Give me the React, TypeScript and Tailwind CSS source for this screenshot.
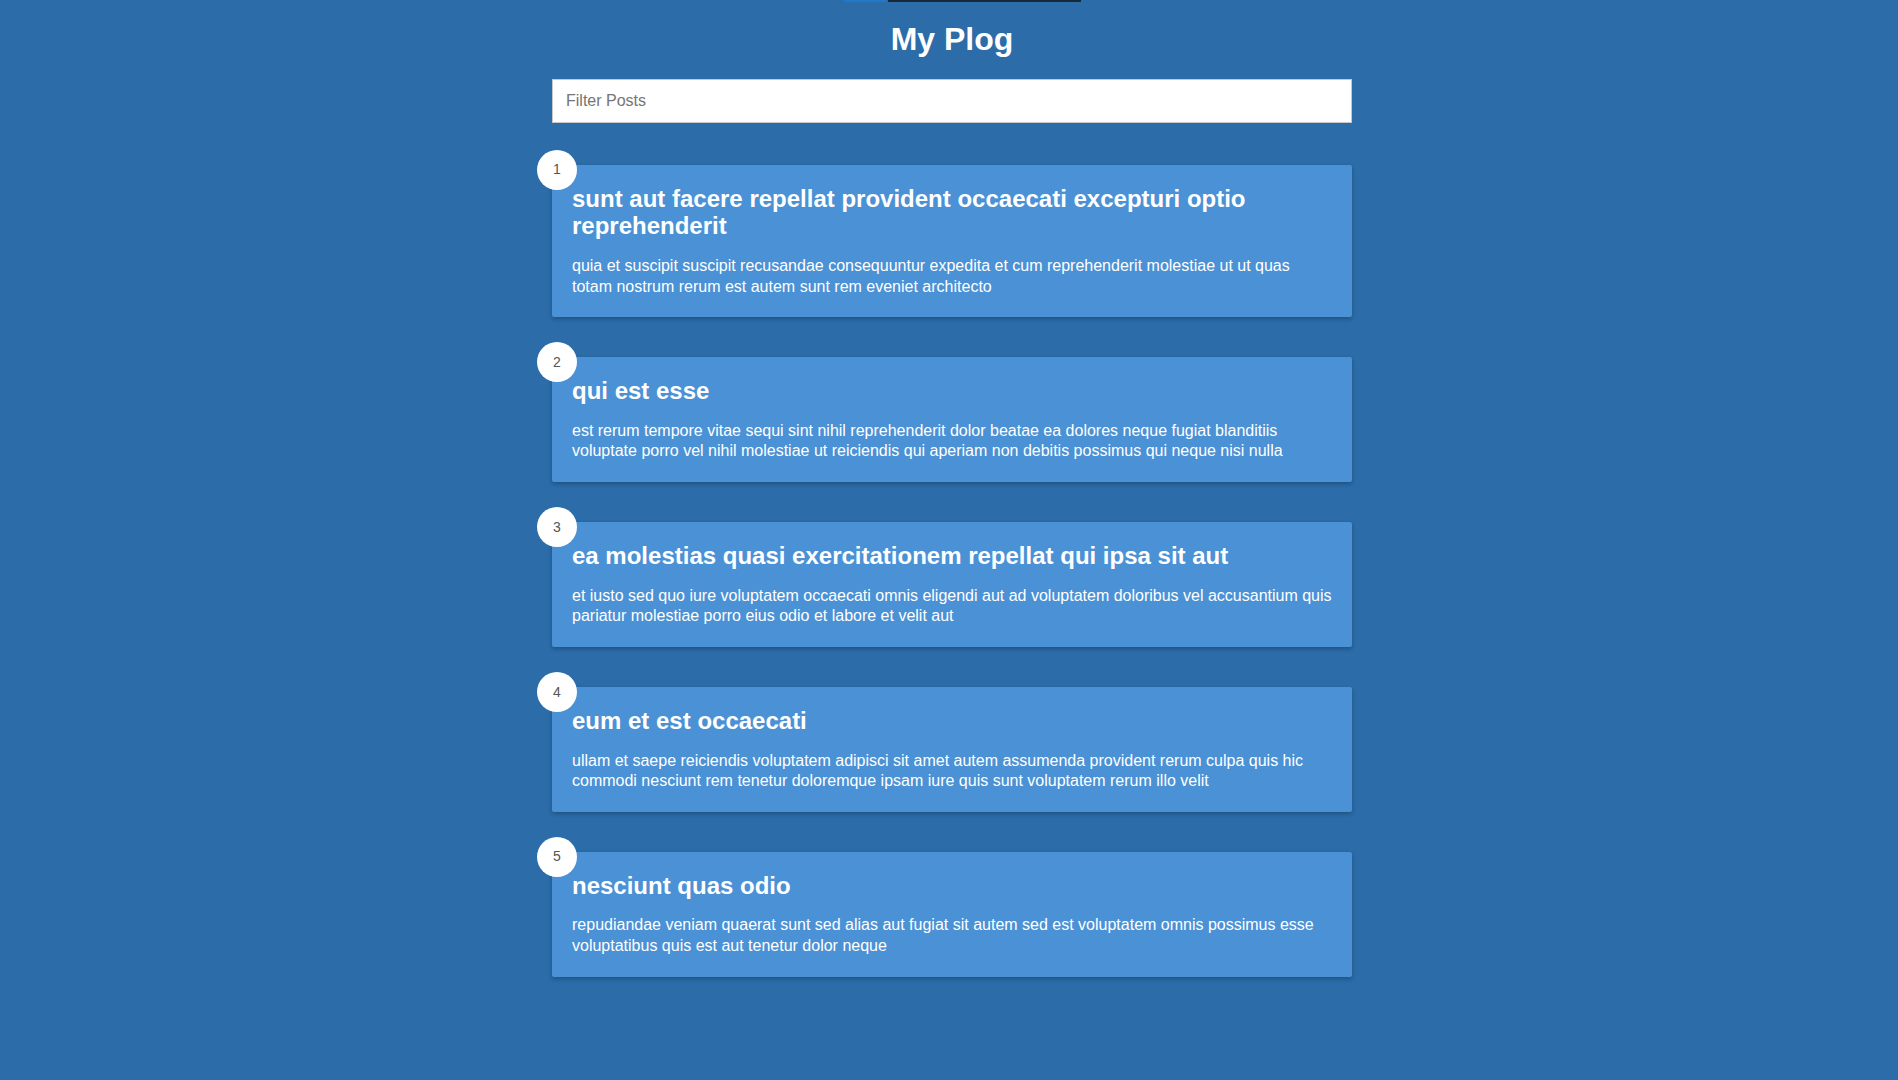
import React from "react";

const posts = [
  {
    id: 1,
    title: "sunt aut facere repellat provident occaecati excepturi optio reprehenderit",
    body: "quia et suscipit suscipit recusandae consequuntur expedita et cum reprehenderit molestiae ut ut quas totam nostrum rerum est autem sunt rem eveniet architecto",
  },
  {
    id: 2,
    title: "qui est esse",
    body: "est rerum tempore vitae sequi sint nihil reprehenderit dolor beatae ea dolores neque fugiat blanditiis voluptate porro vel nihil molestiae ut reiciendis qui aperiam non debitis possimus qui neque nisi nulla",
  },
  {
    id: 3,
    title: "ea molestias quasi exercitationem repellat qui ipsa sit aut",
    body: "et iusto sed quo iure voluptatem occaecati omnis eligendi aut ad voluptatem doloribus vel accusantium quis pariatur molestiae porro eius odio et labore et velit aut",
  },
  {
    id: 4,
    title: "eum et est occaecati",
    body: "ullam et saepe reiciendis voluptatem adipisci sit amet autem assumenda provident rerum culpa quis hic commodi nesciunt rem tenetur doloremque ipsam iure quis sunt voluptatem rerum illo velit",
  },
  {
    id: 5,
    title: "nesciunt quas odio",
    body: "repudiandae veniam quaerat sunt sed alias aut fugiat sit autem sed est voluptatem omnis possimus esse voluptatibus quis est aut tenetur dolor neque",
  },
];

export default function App() {
  return (
    <div
      className="relative min-h-[1080px] w-full bg-[#2b6ca9] text-white"
      style={{ fontFamily: '"Liberation Sans", Arial, sans-serif' }}
    >
      <div className="absolute left-[844px] top-0 h-[2px] w-[42px] bg-[#1f78cc]" />
      <div className="absolute left-[888px] top-0 h-[2px] w-[193px] bg-[#16283a]" />
      <div className="flex justify-center pl-[6px]">
        <div className="flex w-[800px] flex-col">
          <h1 className="mt-[21px] mb-[21px] text-center text-[32px] font-bold leading-[36.8px]">
            My Plog
          </h1>
          <input
            type="text"
            placeholder="Filter Posts"
            className="h-[44px] w-full border border-[#c8c8c8] bg-white px-[13px] text-[16px] text-[#333] placeholder:text-[#757575] outline-none"
            style={{ fontFamily: '"Liberation Sans", Arial, sans-serif' }}
          />
          <div className="mt-[42px] flex flex-col gap-[40px]">
            {posts.map((p) => (
              <div
                key={p.id}
                className="relative rounded-[2px] bg-[#4a91d5] p-[20px] shadow-[0_2px_4px_rgba(0,0,0,0.25)]"
              >
                <div className="absolute -left-[15px] -top-[15px] flex h-[40px] w-[40px] items-center justify-center rounded-full bg-white text-[14px] text-[#555]">
                  {p.id}
                </div>
                <h2 className="mb-[16px] text-[24px] font-bold leading-[27.5px]">{p.title}</h2>
                <p className="text-[16px] leading-[20.7px]">{p.body}</p>
              </div>
            ))}
          </div>
        </div>
      </div>
    </div>
  );
}
